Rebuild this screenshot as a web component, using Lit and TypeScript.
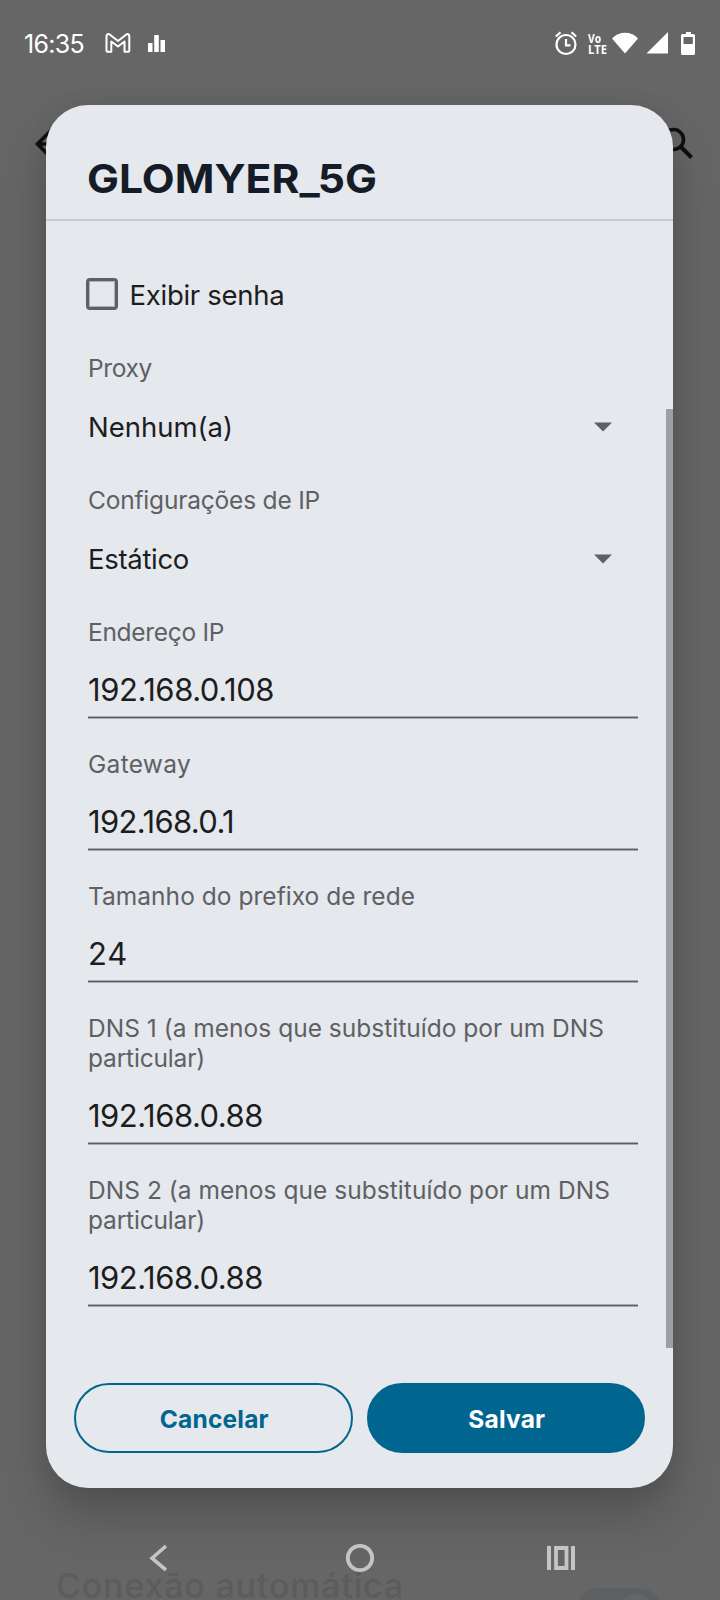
import { LitElement, html, css } from "lit";
import { customElement, property } from "lit/decorators.js";

/**
 * A line of text that takes a given advance width, either by tracking
 * or, with `stretch`, by widening the letters themselves.
 */
@customElement("fit-text")
class FitText extends LitElement {
  @property() text = "";
  @property({ type: Number }) width = 0;
  @property({ type: Boolean }) stretch = false;

  static styles = css`
    :host { display: block; white-space: nowrap; }
    .run { display: inline-block; transform-origin: 0 50%; }
  `;

  updated() {
    const run = this.renderRoot.querySelector<HTMLElement>(".run")!;
    run.style.letterSpacing = "0px";
    run.style.transform = "none";
    const natural = run.getBoundingClientRect().width;
    if (this.stretch) {
      run.style.transform = `scaleX(${this.width / natural})`;
    } else {
      run.style.letterSpacing = `${(this.width - natural) / this.text.length}px`;
    }
  }

  render() {
    return html`<span class="run">${this.text}</span>`;
  }
}

type Line = [string, number];
interface Field {
  label: Line[];
  value: Line;
  select?: boolean;
}

const FIELDS: Field[] = [
  { label: [["Proxy", 64]], value: ["Nenhum(a)", 145], select: true },
  { label: [["Configurações de IP", 232]], value: ["Estático", 101], select: true },
  { label: [["Endereço IP", 136]], value: ["192.168.0.108", 186] },
  { label: [["Gateway", 103]], value: ["192.168.0.1", 146] },
  { label: [["Tamanho do prefixo de rede", 327]], value: ["24", 40] },
  {
    label: [["DNS 1 (a menos que substituído por um DNS", 516], ["particular)", 117]],
    value: ["192.168.0.88", 175],
  },
  {
    label: [["DNS 2 (a menos que substituído por um DNS", 522], ["particular)", 117]],
    value: ["192.168.0.88", 175],
  },
];

@customElement("app-root")
class AppRoot extends LitElement {
  static styles = css`
    :host {
      display: block;
      position: relative;
      width: 720px;
      height: 1600px;
      overflow: hidden;
      background: #666;
      font-family: Inter, "Open Sans", sans-serif;
      color: #1d1d1f;
    }
    svg { display: block; flex: none; }
    .status {
      display: flex;
      align-items: center;
      justify-content: space-between;
      height: 86px;
      box-sizing: border-box;
      padding: 0 23px 0 24px;
      color: #fff;
    }
    .clock { font-size: 25px; line-height: 30px; padding-top: 1px; }
    .group { display: flex; align-items: center; }
    .gmail { margin-left: 20.5px; }
    .bars { margin-left: 17.5px; }
    .behind { position: absolute; left: 0; top: 0; }
    .under-title {
      position: absolute;
      left: 56px;
      top: 1568px;
      font-size: 34px;
      line-height: 36px;
      font-weight: 500;
      color: #5c5c5c;
    }
    .dialog {
      position: relative;
      display: flex;
      flex-direction: column;
      box-sizing: border-box;
      width: 627px;
      height: 1383px;
      margin: 19px 0 0 46px;
      border-radius: 42px;
      background: #e5e8ec;
      box-shadow: 0 28px 48px rgba(0, 0, 0, 0.2), 0 2px 24px rgba(0, 0, 0, 0.07);
    }
    .title {
      box-sizing: border-box;
      height: 116px;
      padding: 48px 0 0 41px;
      border-bottom: 2px solid #c7cace;
      color: #151c28;
      font-size: 40px;
      line-height: 52px;
      font-weight: 700;
    }
    .check {
      display: flex;
      align-items: center;
      gap: 11.5px;
      margin: 57px 0 0 40px;
      height: 32px;
      font-size: 27.5px;
      line-height: 32px;
    }
    .box {
      box-sizing: border-box;
      width: 32px;
      height: 32px;
      border: 3.5px solid #5f6063;
      border-width: 3px;
      outline: 1px solid rgba(95, 96, 99, 0.4);
      outline-offset: -4px;
      border-radius: 4px;
    }
    .check-label { padding-top: 2px; }
    .fields { margin: 42px 35px 0 42px; }
    .field { height: 102px; }
    .field-label { font-size: 24.5px; line-height: 30px; color: #5e6064; position: relative; top: 1px; }
    .select {
      display: flex;
      align-items: center;
      justify-content: space-between;
      box-sizing: border-box;
      height: 88px;
      padding: 2px 26px 0 0;
      font-size: 27.5px;
    }
    .input { padding-top: 24px; font-size: 31px; line-height: 40px; }
    .rule {
      height: 1px;
      margin-top: 6px;
      border: solid #a9acaf;
      border-width: 1px 0;
      background: #5a5c5e;
    }
    .buttons { display: flex; gap: 14px; margin: 47px 28px 0; }
    .button {
      display: flex;
      flex: 1;
      justify-content: center;
      align-items: center;
      box-sizing: border-box;
      height: 70px;
      border-radius: 35px;
      border: 2px solid #00668f;
      color: #00668f;
      font-size: 24.5px;
      font-weight: 700;
      padding: 2px 0 0 2px;
    }
    .primary { background: #00668f; color: #fff; }
    .scroll {
      position: absolute;
      right: 0;
      top: 304px;
      width: 7px;
      height: 939px;
      background: #9e9fa3;
    }
    .nav { position: absolute; left: 0; top: 1530px; }
  `;

  private field(f: Field) {
    return html`
      <div class="field-label">
        ${f.label.map(([t, w]) => html`<fit-text .text=${t} .width=${w}></fit-text>`)}
      </div>
      <div class="field">
        ${f.select
          ? html`<div class="select">
              <fit-text .text=${f.value[0]} .width=${f.value[1]}></fit-text>
              <svg width="18" height="10" viewBox="0 0 18 10"><path d="M0 .5h18L9 9.5z" fill="#5e6063" /></svg>
            </div>`
          : html`<div class="input">
              <fit-text .text=${f.value[0]} .width=${f.value[1]}></fit-text>
              <div class="rule"></div>
            </div>`}
      </div>
    `;
  }

  render() {
    return html`
      <svg class="behind" width="720" height="1600" viewBox="0 0 720 1600" fill="none">
        <path d="M52 129.500L37.500 144L52 158.500M38 144H64" stroke="#101010" stroke-width="3.600" />
        <circle cx="673.500" cy="139.500" r="10" stroke="#101010" stroke-width="3.600" />
        <path d="M680.500 146.500L691.500 157.500" stroke="#101010" stroke-width="4" />
        <rect x="575" y="1588" width="88" height="48" rx="24" fill="#5c6063" />
        <circle cx="636" cy="1612" r="17.500" fill="#656667" />
      </svg>
      <fit-text class="under-title" .text=${"Conexão automática"} .width=${348}></fit-text>

      <div class="status">
        <div class="group">
          <fit-text class="clock" .text=${"16:35"} .width=${60}></fit-text>
          <svg class="gmail" width="26" height="20" viewBox="0 0 26 20" fill="none" stroke="#fff" stroke-width="2" stroke-linejoin="round">
            <path d="M1.500 17.800V3.200C1.500 1.200 3.500 .5 5 1.700L13 8L21 1.700C22.500 .5 24.300 1.200 24.300 3.200V17.800Q24.300 18.800 23.300 18.800H19.500V8.500L13 13.500L6.300 8.500V18.800H2.500Q1.500 18.800 1.500 17.800Z" />
          </svg>
          <svg class="bars" width="18" height="17" viewBox="0 0 18 17" fill="#fff">
            <path d="M0 8h4.500v9H0zM6.200 0h4.600v17H6.200zM12.500 5H17v12h-4.500z" />
          </svg>
        </div>
        <svg width="144" height="26" viewBox="0 0 144 26">
          <g fill="none" stroke="#fff" stroke-width="2.200">
            <circle cx="13" cy="14.500" r="9.500" />
            <path d="M13 9v6.300h4.500M2.800 6.500L7.500 2.300M23.200 6.500L18.500 2.300" />
          </g>
          <text x="35" y="12.500" fill="#fff" font-size="12.500" font-weight="700" font-family="Open Sans" textLength="13" lengthAdjust="spacingAndGlyphs">Vo</text>
          <text x="35" y="23.500" fill="#fff" font-size="12.500" font-weight="700" font-family="Open Sans" textLength="19" lengthAdjust="spacingAndGlyphs">LTE</text>
          <path d="M59 8.500C66 .8 78.500 .8 85 8.500L72 23.500Z" fill="#fff" />
          <path d="M93.500 23.500L115 2V23.500Z" fill="#fff" />
          <path d="M133 2h5v2h2.500q1.500 0 1.500 1.500v18q0 1.500-1.500 1.500h-11q-1.500 0-1.500-1.500v-18q0-1.500 1.500-1.500h3.500z" fill="#fff" />
          <path d="M130.500 7h9.300v7h-9.300z" fill="#666" />
        </svg>
      </div>

      <div class="dialog">
        <div class="title"><fit-text stretch .text=${"GLOMYER_5G"} .width=${290}></fit-text></div>
        <div class="check">
          <div class="box"></div>
          <fit-text class="check-label" .text=${"Exibir senha"} .width=${155}></fit-text>
        </div>
        <div class="fields">${FIELDS.map((f) => this.field(f))}</div>
        <div class="buttons">
          <div class="button"><fit-text .text=${"Cancelar"} .width=${109}></fit-text></div>
          <div class="button primary"><fit-text .text=${"Salvar"} .width=${77}></fit-text></div>
        </div>
        <div class="scroll"></div>
      </div>

      <svg class="nav" width="720" height="60" viewBox="0 0 720 60" fill="none" stroke="#c4c4c4" stroke-width="4">
        <path d="M166 16L152 28.200L166 40" stroke-width="3.600" />
        <circle cx="360" cy="28" r="12.200" stroke-width="3.800" />
        <path d="M549 16V40M573 16V40" />
        <path d="M556 18H566.500V38H556Z" stroke-width="3.800" />
      </svg>
    `;
  }
}
